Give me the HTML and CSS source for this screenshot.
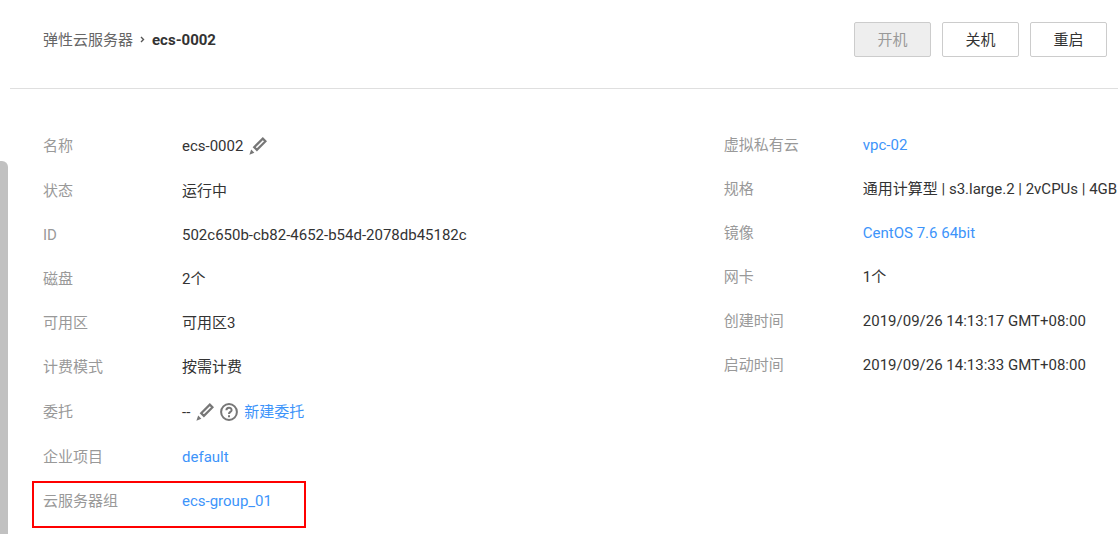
FILE: index.html
```html
<!DOCTYPE html>
<html lang="zh-CN">
<head>
  <meta charset="UTF-8">
  <meta name="viewport" content="width=device-width, initial-scale=1.0">
  <title>弹性云服务器 - ecs-0002</title>
  <link rel="stylesheet" href="styles.css">
</head>
<body>
  <svg class="sprite" aria-hidden="true">
    <symbol id="pencil" viewBox="0 0 18 18">
      <path d="M13.8 1.6 L16.5 4.3 L7.9 12.9 L5.2 10.2 Z" fill="none" stroke="#777" stroke-width="2.2"/>
      <path d="M2.2 12.6 L5.4 15.8 L0.4 17.8 Z" fill="#777"/>
    </symbol>
  </svg>

  <div class="page">
    <div class="side-bar"></div>
    <main class="content">
      <header class="header">
        <nav class="breadcrumb">
          <a href="#">弹性云服务器</a>
          <svg class="arrow" viewBox="0 0 5 7"><path d="M1 1 L3.5 3.5 L1 6" fill="none" stroke="#555" stroke-width="1.4"/></svg>
          <strong>ecs-0002</strong>
        </nav>
        <div class="actions">
          <button type="button" disabled>开机</button>
          <button type="button">关机</button>
          <button type="button">重启</button>
        </div>
      </header>

      <div class="details">
        <dl>
          <div class="row tall">
            <dt>名称</dt>
            <dd>ecs-0002 <button type="button" class="icon-btn" aria-label="修改名称"><svg><use href="#pencil"/></svg></button></dd>
          </div>
          <div class="row"><dt>状态</dt><dd>运行中</dd></div>
          <div class="row"><dt>ID</dt><dd>502c650b-cb82-4652-b54d-2078db45182c</dd></div>
          <div class="row"><dt>磁盘</dt><dd>2个</dd></div>
          <div class="row"><dt>可用区</dt><dd>可用区3</dd></div>
          <div class="row"><dt>计费模式</dt><dd>按需计费</dd></div>
          <div class="row tall">
            <dt>委托</dt>
            <dd>
              --
              <button type="button" class="icon-btn" aria-label="修改委托"><svg><use href="#pencil"/></svg></button>
              <button type="button" class="icon-btn" aria-label="帮助">
                <svg viewBox="0 0 18 18" fill="none" stroke="#777" stroke-width="2">
                  <circle cx="9" cy="9" r="7.9"/>
                  <path d="M6.4 7.3 C6.4 3.9 11.6 3.9 11.6 7.2 C11.6 9 9 8.9 9 11"/>
                  <path d="M9 12.2 V14.2"/>
                </svg>
              </button>
              <a href="#">新建委托</a>
            </dd>
          </div>
          <div class="row"><dt>企业项目</dt><dd><a href="#">default</a></dd></div>
          <div class="row marked"><dt>云服务器组</dt><dd><a href="#">ecs-group_01</a></dd></div>
        </dl>

        <dl>
          <div class="row"><dt>虚拟私有云</dt><dd><a href="#">vpc-02</a></dd></div>
          <div class="row"><dt>规格</dt><dd>通用计算型 | s3.large.2 | 2vCPUs | 4GB</dd></div>
          <div class="row"><dt>镜像</dt><dd><a href="#">CentOS 7.6 64bit</a></dd></div>
          <div class="row"><dt>网卡</dt><dd>1个</dd></div>
          <div class="row"><dt>创建时间</dt><dd>2019/09/26 14:13:17 GMT+08:00</dd></div>
          <div class="row"><dt>启动时间</dt><dd>2019/09/26 14:13:33 GMT+08:00</dd></div>
        </dl>
      </div>
    </main>
  </div>
</body>
</html>
```
FILE: styles.css
```css
* {
  box-sizing: border-box;
}

body {
  margin: 0;
  background-color: #fff;
  color: #333;
  font-family: Roboto, "Noto Sans CJK SC", sans-serif;
  font-size: 15px;
  line-height: 24px;
}

a {
  color: #3d94fa;
  text-decoration: none;
}

.sprite {
  position: absolute;
  width: 0;
  height: 0;
}

.page {
  display: flex;
  gap: 2px;
  min-height: 100vh;
  overflow: hidden;
}

.side-bar {
  flex: none;
  width: 8px;
  margin-top: 161px;
  border-top-right-radius: 6px;
  background-color: #c1c1c1;
}

.content {
  flex: 1;
  min-width: 0;
}

/* header */
.header {
  display: flex;
  justify-content: space-between;
  align-items: flex-start;
  padding: 22px 11px 31px 33px;
  border-bottom: 1px solid #dfdfdf;
}

.breadcrumb {
  display: flex;
  align-items: center;
  gap: 7px;
  height: 35px;
}

.breadcrumb a {
  color: #666;
}

.breadcrumb strong {
  font-weight: 700;
}

.arrow {
  width: 5px;
  height: 7px;
}

.actions {
  display: flex;
  gap: 11px;
}

.actions button {
  width: 77px;
  height: 35px;
  padding: 0;
  border: 1px solid #ccc;
  border-radius: 2px;
  background-color: #fff;
  color: #333;
  font: inherit;
  cursor: pointer;
}

.actions button:disabled {
  background-color: #eee;
  color: #999;
  cursor: default;
}

/* details */
.details {
  display: grid;
  grid-template-columns: minmax(0, 19fr) minmax(0, 11fr);
  padding: 34px 0 0 33px;
  white-space: nowrap;
}

dl {
  margin: 0;
}

.row {
  position: relative;
  display: flex;
  align-items: center;
  height: 44px;
}

.row.tall {
  height: 46px;
}

dt {
  flex: none;
  width: 139px;
  color: #999;
}

dd {
  display: flex;
  align-items: center;
  gap: 6px;
  margin: 0;
}

.icon-btn {
  width: 18px;
  height: 18px;
  padding: 0;
  border: none;
  background: none;
  cursor: pointer;
}

.icon-btn svg {
  display: block;
  width: 18px;
  height: 18px;
}

/* red frame around the server group row */
.marked::after {
  content: "";
  position: absolute;
  top: 2px;
  left: -11px;
  box-sizing: border-box;
  width: 274px;
  height: 47px;
  border: 2px solid #f00;
  pointer-events: none;
}
```
